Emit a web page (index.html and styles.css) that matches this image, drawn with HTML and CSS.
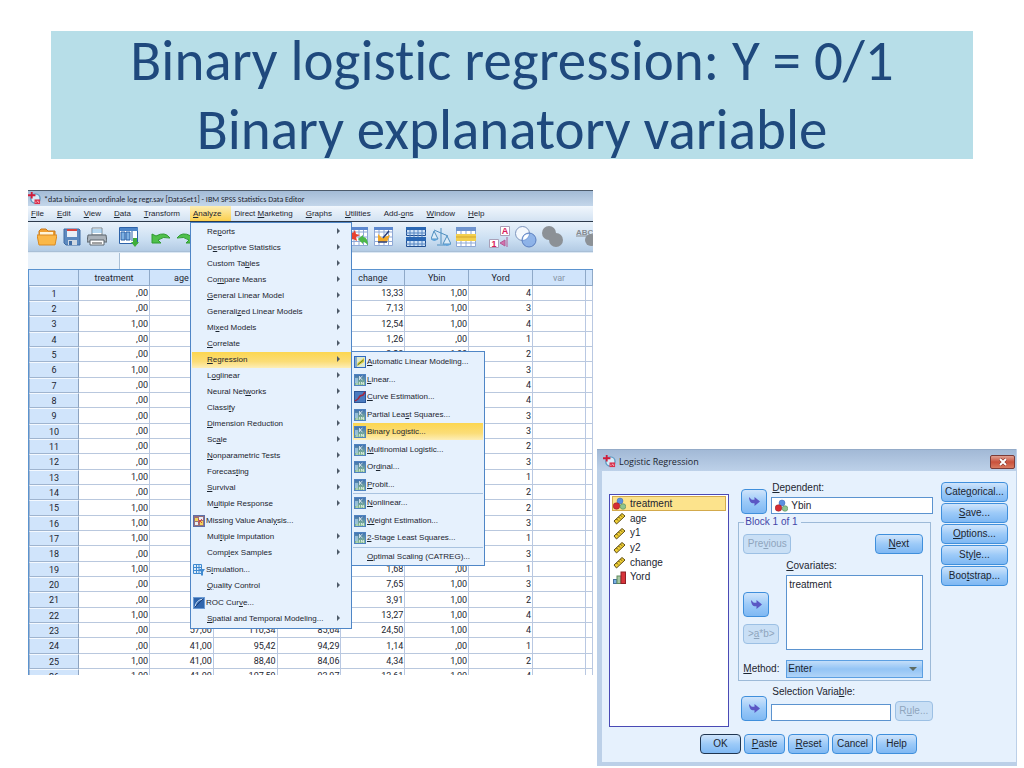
FILE: index.html
```html
<!DOCTYPE html>
<html lang="en">
<head>
  <meta charset="UTF-8">
  <title>Binary logistic regression</title>
  <link rel="stylesheet" href="styles.css">
</head>

<body>

  <!-- shared icons -->
  <svg width="0" height="0" class="defs">
    <defs>
      <linearGradient id="tile-bg" x1="0" y1="0" x2="0" y2="1">
        <stop offset="0" stop-color="#3f6fb5"/>
        <stop offset="1" stop-color="#8fc48a"/>
      </linearGradient>
      <symbol id="app" viewBox="0 0 14 14">
        <circle cx="8" cy="7" r="5" fill="#d8ebf7" stroke="#5f9cc4" stroke-width="1.500"/>
        <path d="M4 0v7M0 3.500h8" stroke="#d01c3a" stroke-width="2"/>
        <path d="M7 8h6v5H7z" fill="#d9304c"/>
        <path d="M8 11h1M10 10h1M11 11h1" stroke="#fff"/>
      </symbol>
      <symbol id="tile" viewBox="0 0 12 12">
        <rect x=".5" y=".5" width="11" height="11" fill="url(#tile-bg)" stroke="#4f83c0"/>
        <path d="M1 9V4h3v5z" fill="#a9cdf0" fill-opacity=".7"/>
        <path d="M5.500 2v4M8.500 2L6 4l2.500 2" fill="none" stroke="#fff" stroke-opacity=".7"/>
        <path d="M2 10h2M5.500 8v2.500M7.500 10.500V8l2 2.500V8" fill="none" stroke="#fff" stroke-opacity=".6"/>
      </symbol>
      <symbol id="arrow" viewBox="0 0 14 12">
        <path d="M1 1l3 3h3V1l6 5-6 5V8H5Q1 7 1 1z" fill="#5b57c4"/>
      </symbol>
      <symbol id="nominal" viewBox="0 0 13 13">
        <circle cx="7" cy="4" r="3" fill="#5b8fe0" stroke="#3b66b5" stroke-width=".5"/>
        <circle cx="3.5" cy="9" r="3.3" fill="#d62b34" stroke="#8d1820" stroke-width=".5"/>
        <circle cx="10" cy="9.5" r="2.8" fill="#8fc48d" stroke="#477a4c" stroke-width=".5"/>
      </symbol>
      <symbol id="scale" viewBox="0 0 13 13">
        <path d="M1 9L9 1.500l3 2.500-8.500 8z" fill="#f0cf35" stroke="#5b4b14"/>
        <path d="M3.500 7l1.500 1.500M5.500 5l1.500 1.500M7.500 3.200L9 4.700" stroke="#5b4b14"/>
      </symbol>
      <symbol id="ordinal" viewBox="0 0 13 13">
        <rect x=".5" y="8.500" width="3.500" height="4" fill="#7ab0e4" stroke="#44719e"/>
        <rect x="4" y="5" width="4" height="7.500" fill="#a9c9a4" stroke="#5f8a5c"/>
        <rect x="8" y="1" width="4.500" height="11.500" fill="#d8343b" stroke="#8f2026"/>
      </symbol>
    </defs>
  </svg>

  <main class="slide">
    <h1><span>Binary logistic regression: Y = 0/1<br>Binary explanatory variable</span></h1>

    <div class="stage">

      <section class="editor">
        <header class="editor-title">
          <svg class="app-icon"><use href="#app"/></svg>
          *data binaire en ordinale log regr.sav [DataSet1] - IBM SPSS Statistics Data Editor
        </header>

        <nav class="menubar">
          <a href="#"><u>F</u>ile</a>
          <a href="#"><u>E</u>dit</a>
          <a href="#"><u>V</u>iew</a>
          <a href="#"><u>D</u>ata</a>
          <a href="#"><u>T</u>ransform</a>
          <div class="menu-holder">
            <a href="#" class="active"><u>A</u>nalyze</a>

            <ul class="menu analyze-menu">
              <li class="more">Re<u>p</u>orts</li>
              <li class="more">D<u>e</u>scriptive Statistics</li>
              <li class="more">Custom Ta<u>b</u>les</li>
              <li class="more">Co<u>m</u>pare Means</li>
              <li class="more"><u>G</u>eneral Linear Model</li>
              <li class="more">Generali<u>z</u>ed Linear Models</li>
              <li class="more">Mi<u>x</u>ed Models</li>
              <li class="more"><u>C</u>orrelate</li>
              <li class="more selected"><u>R</u>egression</li>
              <li class="more">L<u>o</u>glinear</li>
              <li class="more">Neural Net<u>w</u>orks</li>
              <li class="more">Classi<u>f</u>y</li>
              <li class="more"><u>D</u>imension Reduction</li>
              <li class="more">Sc<u>a</u>le</li>
              <li class="more"><u>N</u>onparametric Tests</li>
              <li class="more">Forecas<u>t</u>ing</li>
              <li class="more"><u>S</u>urvival</li>
              <li class="more">M<u>u</u>ltiple Response</li>
              <li class="with-icon">
                <svg viewBox="0 0 12 12"><rect x=".5" y=".5" width="11" height="11" fill="#9a6f78" stroke="#5d6fa8"/><path d="M2 3h3v3H2zM7 6h3v4H7z" fill="#f3d65a"/><path d="M6 2h4v3H6zM2 7h3v3H2z" fill="#e8edf5"/><path d="M5 4l4 4M9 4L5 8" stroke="#d8433f"/></svg>
                <span>Missing Value Anal<u>y</u>sis...</span>
              </li>
              <li class="more">Mul<u>t</u>iple Imputation</li>
              <li class="more">Comp<u>l</u>ex Samples</li>
              <li class="with-icon">
                <svg viewBox="0 0 12 12"><path d="M.5.5h8v9h-8zM3.500.5v9M6 .5v9M.5 3.500h8M.5 6.500h8" fill="#dcecfb" stroke="#3f8ad0"/><path d="M6 5h6L10 8v3.500H8V8z" fill="#3f8ad0"/></svg>
                <span>S<u>i</u>mulation...</span>
              </li>
              <li class="more"><u>Q</u>uality Control</li>
              <li class="with-icon">
                <svg viewBox="0 0 12 12"><rect x=".5" y=".5" width="11" height="11" fill="#2f65ad" stroke="#6b9bd4"/><path d="M2 10Q3 3 10 2" fill="none" stroke="#cfe3f7"/><path d="M2 10l8-8" stroke="#1c3f78"/></svg>
                <span>ROC Cur<u>v</u>e...</span>
              </li>
              <li class="more"><u>S</u>patial and Temporal Modeling...</li>
            </ul>

            <ul class="menu regression-menu">
              <li>
                <svg viewBox="0 0 12 12"><rect x=".5" y=".5" width="11" height="11" fill="#dbe9d0" stroke="#2f6ac0"/><path d="M2 1v10" stroke="#2f6ac0"/><path d="M3.500 10V7L10 2v4z" fill="#e5c832"/><path d="M3.500 9l6-5" stroke="#4c7d3c"/></svg>
                <span><u>A</u>utomatic Linear Modeling...</span>
              </li>
              <li><svg><use href="#tile"/></svg><span><u>L</u>inear...</span></li>
              <li>
                <svg viewBox="0 0 12 12"><rect x=".5" y=".5" width="11" height="11" fill="#4a7bc0" stroke="#2c5698"/><path d="M1 10l3-2 2-3 3-1 2-3" fill="none" stroke="#a3283f" stroke-width="1.500"/></svg>
                <span><u>C</u>urve Estimation...</span>
              </li>
              <li><svg><use href="#tile"/></svg><span>Partial Lea<u>s</u>t Squares...</span></li>
              <li class="selected"><svg><use href="#tile"/></svg><span>Binary Lo<u>g</u>istic...</span></li>
              <li><svg><use href="#tile"/></svg><span><u>M</u>ultinomial Logistic...</span></li>
              <li><svg><use href="#tile"/></svg><span>Or<u>d</u>inal...</span></li>
              <li><svg><use href="#tile"/></svg><span><u>P</u>robit...</span></li>
              <li class="divided"><svg><use href="#tile"/></svg><span><u>N</u>onlinear...</span></li>
              <li><svg><use href="#tile"/></svg><span><u>W</u>eight Estimation...</span></li>
              <li><svg><use href="#tile"/></svg><span><u>2</u>-Stage Least Squares...</span></li>
              <li class="divided no-icon"><span><u>O</u>ptimal Scaling (CATREG)...</span></li>
            </ul>
          </div>
          <a href="#">Direct <u>M</u>arketing</a>
          <a href="#"><u>G</u>raphs</a>
          <a href="#"><u>U</u>tilities</a>
          <a href="#">Add-<u>o</u>ns</a>
          <a href="#"><u>W</u>indow</a>
          <a href="#"><u>H</u>elp</a>
        </nav>

        <div class="toolbar">
          <div class="tools">
            <div class="tool-group">
              <svg viewBox="0 0 20 20"><path d="M2 4l2-2h5l2 2h7v10H2z" fill="#f0a030" stroke="#c9781a"/><path d="M3 5h13v6H3z" fill="#fff4d8"/><path d="M0 8h20l-2 10H2z" fill="#fbb848" stroke="#d98a22"/></svg>
              <svg viewBox="0 0 20 20"><path d="M2 2h15l1 1v15H4l-2-2z" fill="#5c89bf" stroke="#3f6ba3"/><path d="M5 2h10v8H5z" fill="#e9eff6"/><path d="M5 3h10" stroke="#d9433f" stroke-width="2"/><path d="M6 13h9v5H6z" fill="#cfd8e2"/><path d="M7 14h3v4H7z" fill="#3f6ba3"/></svg>
              <svg viewBox="0 0 20 20"><path d="M5 1h10v7H5z" fill="#fff" stroke="#7d8790"/><path d="M1 8h18l1 7H0z" fill="#aab2ba" stroke="#5d666e"/><path d="M3 13h14v5H3z" fill="#fff" stroke="#5d666e"/><path d="M5 3h10M5 5h10" stroke="#6fb0e0"/><path d="M5 16h10" stroke="#444"/></svg>
            </div>
            <div class="tool-group">
              <svg viewBox="0 0 20 20"><path d="M.5.5h18v16H.5z" fill="#fff" stroke="#2d62a8"/><path d="M1 1h18v3H1z" fill="#4d86c9"/><path d="M2 5h4v8H2zM7 5h4v8H7z" fill="#7fb1e2" stroke="#2d62a8"/><path d="M13 4v10" stroke="#2d62a8"/><path d="M14 11h4v4h2l-4 5-4-5h2z" fill="#3fae3a"/></svg>
            </div>
            <div class="tool-group">
              <svg viewBox="0 0 20 20"><path d="M1 7v9h9l-3-3q5-4 12-2Q14 4 5 9z" fill="#4fc04a" stroke="#2f9a30"/></svg>
              <svg viewBox="0 0 20 20"><path d="M19 7v9h-9l3-3q-5-4-12-2 5-7 14-2z" fill="#4fc04a" stroke="#2f9a30"/></svg>
            </div>
          </div>
          <div class="tools">
            <div class="tool-group">
              <svg viewBox="0 0 20 20"><path d="M.5.5h18v18H.5zM5 .5v18M10 .5v18M14.500.5v18M.5 5h18M.5 10h18M.5 14.500h18" fill="#fff" stroke="#8fa9d6"/><path d="M0 0h19v3H0z" fill="#5c88cf"/><path d="M1 4l3 2 2-3 1 4 4 1-4 2 1 4-4-2-3 2z" fill="#e8402f"/><path d="M9 12l5-4v2q5 0 5 9-2-4-5-4v2z" fill="#4db848"/></svg>
              <svg viewBox="0 0 20 20"><path d="M.5.5h18v18H.5zM5 .5v18M10 .5v18M14.500.5v18M.5 5h18M.5 10h18M.5 14.500h18" fill="#fff" stroke="#8fa9d6"/><path d="M0 0h19v3H0z" fill="#5c88cf"/><path d="M4 7l4 4 8-3-3 7H4z" fill="#f2a92a"/><path d="M9 11l6-7M4 15h9" stroke="#2b3f7d" stroke-width="1.500"/></svg>
            </div>
            <div class="tool-group">
              <svg viewBox="0 0 20 20"><path d="M.5.5h19v8H.5zM.5 11.500h19v8H.5z" fill="#cfe2f6" stroke="#1f4d90"/><path d="M4 1v18M8 1v18M12 1v18M16 1v18M0 6h20M0 17h20" stroke="#5585c2"/><path d="M0 0h20v3H0zM0 10h20v4H0z" fill="#2a67b3"/></svg>
              <svg viewBox="0 0 20 20"><path d="M3 3l14 6M10 1v16M6 18h8" stroke="#4f8fc0" fill="none"/><path d="M3 4L0 12h7zM16 9l-4 8h8z" fill="#dcecf8" stroke="#4f8fc0"/><path d="M0 12q3 4 7 0zM12 17q4 4 8 0z" fill="#5fa2d8"/></svg>
              <svg viewBox="0 0 20 20"><path d="M.5.5h19v19H.5zM5 .5v19M10 .5v19M15 .5v19M.5 16h19" fill="#fff" stroke="#8fa9d6"/><path d="M0 0h20v4H0z" fill="#6f95cf"/><path d="M0 7h20v7H0z" fill="#f2cf4e"/><path d="M0 10h20" stroke="#d3a52d"/></svg>
            </div>
            <div class="tool-group wide">
              <svg viewBox="0 0 22 22"><path d="M12.500.5h9v9h-9zM1.500 13.500h9v8h-9z" fill="#fff" stroke="#a9a0b8"/><text x="17" y="8" class="glyph">A</text><text x="6" y="21" class="glyph">1</text><path d="M19 11v10M12 17l5-3v6z" stroke="#b35a94" fill="#d472ae"/></svg>
              <svg viewBox="0 0 22 22"><circle cx="7.500" cy="7.500" r="7" fill="#f4f8fd" stroke="#7d95bd"/><circle cx="14" cy="14" r="7" fill="#7ba5e6" fill-opacity=".75" stroke="#5b7fc0"/><path d="M8 14q0-6 6-6-1 5-6 6z" fill="#fff"/></svg>
              <svg viewBox="0 0 22 22"><circle cx="7" cy="7" r="7" fill="#8c9196"/><circle cx="14" cy="14" r="7" fill="#8c9196"/></svg>
            </div>
            <div class="tool-group">
              <svg viewBox="0 0 17 20" class="cut"><text x="0" y="8" class="abc">ABC</text><path d="M0 9h17" stroke="#878b90"/><circle cx="15" cy="13" r="6" fill="#8c9196"/></svg>
            </div>
          </div>
        </div>

        <div class="cell-bar">
          <input type="text" class="cell-name" aria-label="Cell">
          <input type="text" class="cell-value" aria-label="Value">
        </div>

        <div class="sheet">
          <table>
            <colgroup>
              <col class="col-num"><col class="col-first"><col><col><col><col><col><col><col class="col-var"><col class="col-rest">
            </colgroup>
            <thead>
              <tr>
                <th></th><th>treatment</th><th>age</th><th>y1</th><th>y2</th><th>change</th><th>Ybin</th><th>Yord</th><th class="unused">var</th><th></th>
              </tr>
            </thead>
            <tbody id="rows"></tbody>
          </table>
        </div>
      </section>

      <section class="dialog">
        <header class="dialog-title">
          <svg class="app-icon"><use href="#app"/></svg>
          <span>Logistic Regression</span>
          <button type="button" class="close" aria-label="Close">
            <svg viewBox="0 0 10 8"><path d="M2 1l6 6M8 1L2 7" stroke="#7a2a22" stroke-width="3"/><path d="M2 1l6 6M8 1L2 7" stroke="#fff" stroke-width="2"/></svg>
          </button>
        </header>

        <form class="dialog-body">
          <div class="panes">
            <ul class="variables">
              <li class="selected"><svg><use href="#nominal"/></svg>treatment</li>
              <li><svg><use href="#scale"/></svg>age</li>
              <li><svg><use href="#scale"/></svg>y1</li>
              <li><svg><use href="#scale"/></svg>y2</li>
              <li><svg><use href="#scale"/></svg>change</li>
              <li><svg><use href="#ordinal"/></svg>Yord</li>
            </ul>

            <div class="model">
              <div class="target">
                <button type="button" class="move" aria-label="Move to dependent"><svg><use href="#arrow"/></svg></button>
                <div class="field">
                  <label for="dependent"><u>D</u>ependent:</label>
                  <div class="icon-input">
                    <svg><use href="#nominal"/></svg>
                    <input type="text" id="dependent" value="Ybin">
                  </div>
                </div>
              </div>

              <fieldset>
                <legend>Block 1 of 1</legend>
                <div class="block">
                  <div class="block-nav">
                    <button type="button" disabled>Pre<u>v</u>ious</button>
                    <button type="button"><u>N</u>ext</button>
                  </div>
                  <label for="covariates" class="cov-label"><u>C</u>ovariates:</label>
                  <div class="block-moves">
                    <button type="button" class="move" aria-label="Move to covariates"><svg><use href="#arrow"/></svg></button>
                    <button type="button" disabled>&gt;<u>a</u>*b&gt;</button>
                  </div>
                  <textarea id="covariates">treatment</textarea>
                  <label for="method" class="method-label"><u>M</u>ethod:</label>
                  <select id="method">
                    <option>Enter</option>
                  </select>
                </div>
              </fieldset>

              <div class="target selection">
                <button type="button" class="move" aria-label="Move to selection variable"><svg><use href="#arrow"/></svg></button>
                <div class="field">
                  <label for="selection">Selection Varia<u>b</u>le:</label>
                  <input type="text" id="selection">
                </div>
                <button type="button" class="rule" disabled>R<u>u</u>le...</button>
              </div>
            </div>

            <div class="options">
              <button type="button">Cate<u>g</u>orical...</button>
              <button type="button"><u>S</u>ave...</button>
              <button type="button"><u>O</u>ptions...</button>
              <button type="button">Sty<u>l</u>e...</button>
              <button type="button">Boo<u>t</u>strap...</button>
            </div>
          </div>

          <div class="actions">
            <button type="button" class="default">OK</button>
            <button type="button"><u>P</u>aste</button>
            <button type="button"><u>R</u>eset</button>
            <button type="button">Cancel</button>
            <button type="button">Help</button>
          </div>
        </form>
      </section>

    </div>
  </main>

  <script>
    // treatment, age, y1, y2, change, Ybin, Yord
    const data = [
      [",00", "", "", "", "13,33", "1,00", "4"],
      [",00", "", "", "", "7,13", "1,00", "3"],
      ["1,00", "", "", "", "12,54", "1,00", "4"],
      [",00", "", "", "", "1,26", ",00", "1"],
      [",00", "", "", "", "3,28", "1,00", "2"],
      ["1,00", "", "", "", "", "", "3"],
      [",00", "", "", "", "", "", "4"],
      [",00", "", "", "", "", "", "4"],
      [",00", "", "", "", "", "", "3"],
      [",00", "", "", "", "", "", "3"],
      [",00", "", "", "", "", "", "2"],
      [",00", "", "", "", "", "", "3"],
      ["1,00", "", "", "", "", "", "1"],
      [",00", "", "", "", "", "", "2"],
      ["1,00", "", "", "", "", "", "2"],
      ["1,00", "", "", "", "", "", "3"],
      ["1,00", "", "", "", "", "", "1"],
      [",00", "", "", "", "", "", "3"],
      ["1,00", "", "", "", "1,68", ",00", "1"],
      [",00", "", "", "", "7,65", "1,00", "3"],
      [",00", "", "", "", "3,91", "1,00", "2"],
      ["1,00", "", "", "", "13,27", "1,00", "4"],
      [",00", "57,00", "110,34", "85,64", "24,50", "1,00", "4"],
      [",00", "41,00", "95,42", "94,29", "1,14", ",00", "1"],
      ["1,00", "41,00", "88,40", "84,06", "4,34", "1,00", "2"],
      ["1,00", "41,00", "107,59", "93,97", "13,61", "1,00", "4"]
    ];

    const rows = document.getElementById('rows');

    data.forEach((values, index) => {
      const row = document.createElement('tr');
      const cells = values.map(value => `<td>${value}</td>`).join("");
      row.innerHTML = `<th>${index + 1}</th>${cells}<td></td><td></td>`;
      rows.appendChild(row);
    });
  </script>

</body>
</html>
```

FILE: styles.css
```css
* {
  box-sizing: border-box;
}

body {
  margin: 0;
  background: white;
  color: #1c2530;
  font-family: 'Liberation Sans', Arial, sans-serif;
  font-size: 10px;
  line-height: 12px;
}

.defs {
  position: absolute;
}

ul {
  margin: 0;
  padding: 0;
  list-style: none;
}

svg {
  display: block;
  flex: none;
}

.slide {
  min-height: 100vh;
  overflow: hidden;
}

h1 {
  display: grid;
  align-content: center;
  height: 128px;
  margin: 31px 5%;
  background-color: #b7dee8;
  color: #1f497d;
  font-family: Carlito, Calibri, Lato, sans-serif;
  font-size: 57px;
  font-variant-ligatures: none;
  font-weight: normal;
  line-height: 69px;
  text-align: center;
}

.stage {
  display: grid;
  grid-template-columns: 565fr 420fr;
  gap: 4px;
  padding: 0 7px 2px 28px;
}

.app-icon {
  width: 13px;
  height: 13px;
}

/* data editor */

.editor {
  position: relative;
  align-self: start;
  min-width: 0;
  overflow: hidden;
  font-size: 8px;
}

.editor-title {
  display: flex;
  align-items: center;
  gap: 3px;
  height: 16px;
  border-top: 1px solid #4d5b6b;
  background: linear-gradient(#a3bbd6, #c3d6ea);
  font-family: Carlito, Calibri, sans-serif;
  white-space: nowrap;
}

.menubar {
  display: flex;
  gap: 13px;
  height: 16px;
  padding-left: 3px;
  border-bottom: 1px solid #2c3a4c;
  background: linear-gradient(#f1f7fd, #d3e2f2);
  line-height: 15px;
  white-space: nowrap;
}

.menubar a {
  color: #1c2530;
  text-decoration: none;
}

.menubar .active {
  display: block;
  margin: 0 -10px 0 -3px;
  padding: 0 10px 0 3px;
  background: linear-gradient(#fdeeb4, #fbcf4d);
}

.menu {
  position: absolute;
  border: 1px solid #4f86c6;
  background-color: #e6f1fd;
  line-height: 16px;
}

.menu li {
  display: flex;
  align-items: center;
}

.menu svg {
  width: 12px;
  height: 12px;
}

.menu .selected {
  background: linear-gradient(#fcd650, #fbdd78 60%, #fdeeb8);
}

.analyze-menu {
  top: 32px;
  left: 162px;
  width: 162px;
  padding: 1px 0;
}

.analyze-menu .more {
  display: block;
  position: relative;
  height: 16px;
  margin-left: 1px;
  padding-left: 15px;
}

.more::after {
  content: "";
  position: absolute;
  top: 4px;
  right: 11px;
  border: 3px solid transparent;
  border-left-color: #4d5a68;
  border-right-width: 0;
}

.analyze-menu .with-icon {
  height: 17px;
  padding-left: 2px;
  gap: 1px;
}

.regression-menu {
  top: 161px;
  left: 323px;
  width: 134px;
  padding: 1px 1px 0;
}

.regression-menu li {
  height: 17px;
  padding-left: 1px;
  gap: 1px;
}

.regression-menu li:nth-child(even) {
  margin-top: 1px;
}

.regression-menu .divided {
  height: 18px;
  border-top: 1px solid #a9c3e0;
}

.regression-menu .no-icon {
  padding-left: 14px;
}

.toolbar {
  display: flex;
  justify-content: space-between;
  height: 30px;
  padding-left: 9px;
  border-bottom: 1px solid #a9bfd6;
  background: linear-gradient(#e9f2fb, #cbdff2 60%, #b3cbe4);
}

.tools {
  display: flex;
  align-items: center;
  gap: 12px;
}

.tool-group {
  display: flex;
  gap: 5px;
}

.tool-group svg {
  width: 20px;
  height: 20px;
}

.wide svg {
  width: 22px;
  height: 22px;
}

.tool-group .cut {
  width: 17px;
}

.glyph {
  fill: #d81b5b;
  font-size: 9px;
  font-weight: bold;
  text-anchor: middle;
}

.abc {
  fill: #878b90;
  font-size: 8px;
  font-weight: bold;
}

.cell-bar {
  display: flex;
  height: 18px;
  border-top: 1px solid #dce8f4;
  border-bottom: 1px solid #5b93cf;
}

.cell-bar input {
  border: 0;
  padding: 0 3px;
  font: inherit;
}

.cell-bar .cell-name {
  width: 92px;
  border-right: 1px solid #a9bfd6;
  background-color: #e9f2fb;
}

.cell-bar .cell-value {
  flex: 1;
  min-width: 0;
}

.sheet {
  height: 405px;
  overflow: hidden;
  border-left: 1px solid #5b93cf;
  font-family: Roboto, 'Liberation Sans', sans-serif;
  font-size: 9px;
}

.sheet table {
  width: 100%;
  table-layout: fixed;
  border-collapse: separate;
  border-spacing: 0;
  line-height: 12px;
}

.col-num {
  width: 50px;
}

.col-first {
  width: 71px;
}

.col-var {
  width: 53px;
}

.col-rest {
  width: 7px;
}

.sheet th,
.sheet td {
  height: 15px;
  padding: 0 1px;
  border-right: 1px solid #b9c8e2;
  border-bottom: 1px solid #b9c8de;
  text-align: right;
}

.sheet th {
  background-color: #d0e4fb;
  font-weight: normal;
  text-align: center;
}

.sheet thead th {
  height: 16px;
  padding: 0;
  border-color: #8fa9c8;
}

.sheet tbody th {
  border: 1px solid #9fb4cf;
  border-top-color: #f4f9ff;
  border-right-color: #8da3c0;
}

.sheet tbody tr:nth-child(3n) > * {
  height: 16px;
}

.sheet .unused {
  color: #8795a6;
}

/* logistic regression dialog */

.dialog {
  align-self: end;
  min-width: 0;
  margin-top: 259px;
  border: solid #bcd0e8;
  border-width: 0 1px 4px 5px;
  background-color: #bcd0e8;
}

.dialog-title {
  display: flex;
  align-items: center;
  gap: 3px;
  height: 22px;
  margin-left: -5px;
  padding: 2px 1px 0 6px;
  border-top: 1px solid #94abc8;
  background: linear-gradient(#a2b9d6, #bdd1e9);
  font-family: 'Open Sans', 'Segoe UI', sans-serif;
  font-size: 9px;
}

.close {
  display: flex;
  align-items: center;
  justify-content: center;
  width: 25px;
  height: 14px;
  margin-left: auto;
  padding: 0;
  border: 1px solid #7a3b38;
  border-radius: 2px;
  background: linear-gradient(#e0a092, #c9513c 50%, #d97a5f);
}

.close svg {
  width: 10px;
  height: 8px;
}

.dialog-body {
  padding: 11px 8px 8px 7px;
  background-color: #e6f1fd;
}

.panes {
  display: grid;
  grid-template-columns: 120fr 195fr 67fr;
  gap: 8px;
}

.dialog-body button {
  height: 20px;
  padding: 0;
  border: 1px solid #3f8fdc;
  border-radius: 4px;
  background: linear-gradient(#cfe4fb, #9ccaf8 50%, #7fb8f3);
  color: #1c2530;
  font: inherit;
  white-space: nowrap;
}

.dialog-body button:disabled {
  border-color: #9cc0e4;
  background: #c9dff5;
  color: #8fa5bd;
}

.dialog-body .move {
  display: flex;
  align-items: center;
  justify-content: center;
  flex: none;
  width: 26px;
  height: 25px;
}

.move svg {
  width: 13px;
  height: 11px;
}

.variables {
  min-height: 233px;
  margin-top: 12px;
  padding: 1px 2px;
  border: 1px solid #4a4ab5;
  background-color: white;
}

.variables li {
  display: flex;
  align-items: center;
  gap: 4px;
  height: 15px;
  padding-left: 1px;
}

.variables li:nth-child(3n) {
  height: 14px;
}

.variables .selected {
  border: 1px solid #d3aa4c;
  padding-left: 0;
  background-color: #fce38c;
}

.variables svg {
  width: 13px;
  height: 13px;
}

.model {
  min-width: 0;
  padding-left: 1px;
}

.target {
  display: flex;
  align-items: flex-end;
  gap: 4px;
  padding-left: 3px;
}

.field {
  display: flex;
  flex: 1;
  flex-direction: column;
  gap: 3px;
  min-width: 0;
}

.field label {
  padding-left: 1px;
}

.dialog-body input,
.dialog-body textarea,
.dialog-body select {
  width: 100%;
  margin: 0;
  border: 1px solid #5b93cf;
  border-radius: 0;
  background-color: white;
  color: #1c2530;
  font: inherit;
}

.dialog-body input {
  height: 17px;
  padding: 0 3px;
}

.icon-input {
  position: relative;
}

.icon-input svg {
  position: absolute;
  top: 2px;
  left: 4px;
  width: 13px;
  height: 13px;
}

.dialog-body .icon-input input {
  display: block;
  padding-left: 19px;
}

fieldset {
  min-width: 0;
  margin: 2px 2px 5px 0;
  padding: 6px 7px 2px 4px;
  border: 1px solid #9dbad8;
}

legend {
  margin-left: 1px;
  padding: 0 3px 0 1px;
  color: #4346a8;
}

.block {
  position: relative;
  display: grid;
  grid-template-columns: 36px 1fr;
  column-gap: 7px;
}

.block-nav {
  display: flex;
  grid-column: 1 / -1;
  justify-content: space-between;
}

.block-nav button {
  width: 48px;
}

.cov-label {
  grid-column: 2;
  margin: 6px 0 3px;
}

.block-moves {
  display: flex;
  flex-direction: column;
  justify-content: flex-end;
  gap: 7px;
  padding-bottom: 6px;
}

.dialog-body textarea {
  display: block;
  height: 75px;
  padding: 3px 2px;
  resize: none;
}

.method-label {
  align-self: end;
  padding-bottom: 3px;
}

.dialog-body select {
  height: 18px;
  margin-top: 10px;
  padding: 0 1px;
  appearance: none;
  border-color: #5b9fe2;
  background: linear-gradient(#c3defa, #93c4f5 50%, #b0d4f8);
}

/* drop-down arrow of the method list */
.block::after {
  content: "";
  position: absolute;
  right: 6px;
  bottom: 7px;
  border: 4px solid transparent;
  border-top-color: #5d6b62;
  border-bottom-width: 0;
}

.selection .field {
  gap: 6px;
}

.selection .rule {
  width: 38px;
}

.options {
  display: flex;
  flex-direction: column;
  gap: 1px;
}

.actions {
  display: flex;
  justify-content: center;
  gap: 3px;
  padding-top: 7px;
}

.actions button {
  width: 41px;
}

.actions .default {
  border-color: #1f3550;
}
```
